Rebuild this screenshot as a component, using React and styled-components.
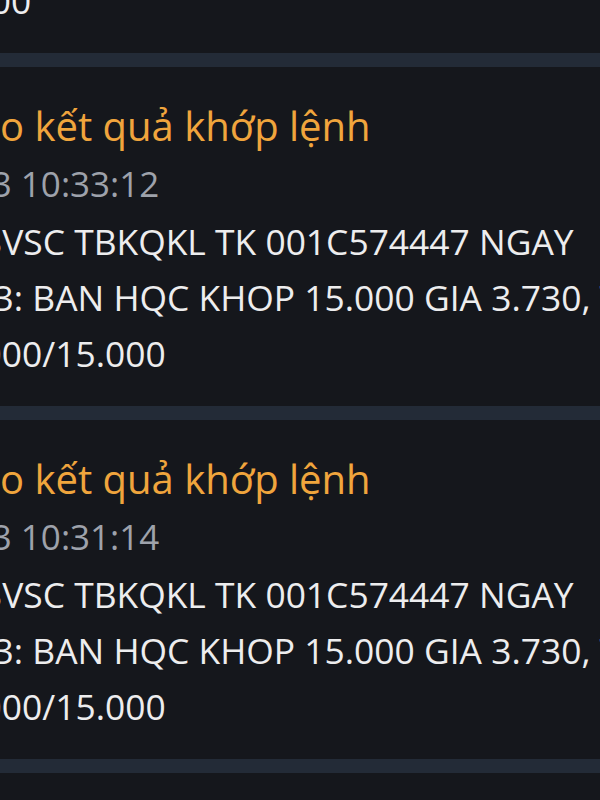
import React from 'react';
import styled, { createGlobalStyle } from 'styled-components';

const GlobalStyle = createGlobalStyle`
  html, body { margin: 0; padding: 0; background: #15171c; }
  body { font-family: "Open Sans", "Noto Sans", "DejaVu Sans", sans-serif; }
`;

const Viewport = styled.div`
  width: 600px;
  height: 800px;
  overflow: hidden;
  background: #15171c;
`;

const Feed = styled.div`
  display: flex;
  flex-direction: column;
  width: 1100px;
  margin-left: -174px;
  margin-top: -286px;
`;

const Item = styled.article`
  display: flex;
  flex-direction: column;
  padding: 33px 0 25px 0;
  background: #15171c;
`;

const Divider = styled.div`
  height: 14px;
  background: #232b37;
`;

const Title = styled.h3`
  margin: 0;
  font-size: 40px;
  line-height: 52px;
  font-weight: 400;
  color: #f0a53d;
  white-space: nowrap;
`;

const Time = styled.div`
  margin-top: 3px;
  font-size: 35px;
  line-height: 58px;
  color: #9ea2ab;
  white-space: nowrap;
`;

const Body = styled.p`
  margin: 0;
  font-size: 35.4px;
  line-height: 56px;
  color: #ededee;
  white-space: nowrap;
`;

const items = [
  {
    time: '18/08/2023 10:35:40',
    lines: [
      'Tin nhắn BVSC TBKQKL TK 001C574447 NGAY',
      '18/08/2023: BAN HQC KHOP 1.500 GIA 3.730, TONG KL',
      'KHOP: 1.500',
    ],
  },
  {
    time: '18/08/2023 10:33:12',
    lines: [
      'Tin nhắn BVSC TBKQKL TK 001C574447 NGAY',
      '18/08/2023: BAN HQC KHOP 15.000 GIA 3.730, TONG KL',
      'KHOP 15.000/15.000',
    ],
  },
  {
    time: '18/08/2023 10:31:14',
    lines: [
      'Tin nhắn BVSC TBKQKL TK 001C574447 NGAY',
      '18/08/2023: BAN HQC KHOP 15.000 GIA 3.730, TONG KL',
      'KHOP 15.000/15.000',
    ],
  },
  {
    time: '18/08/2023 10:30:02',
    lines: [
      'Tin nhắn BVSC TBKQKL TK 001C574447 NGAY',
      '18/08/2023: MUA HQC KHOP 10.000 GIA 3.720, TONG KL',
      'KHOP 10.000/10.000',
    ],
  },
];

export default function App() {
  return (
    <>
      <GlobalStyle />
      <Viewport>
        <Feed>
          {items.map((it, i) => (
            <React.Fragment key={i}>
              {i > 0 && <Divider />}
              <Item>
                <Title>Thông báo kết quả khớp lệnh</Title>
                <Time>{it.time}</Time>
                <Body>
                  {it.lines[0]}
                  <br />
                  {it.lines[1]}
                  <br />
                  {it.lines[2]}
                </Body>
              </Item>
            </React.Fragment>
          ))}
        </Feed>
      </Viewport>
    </>
  );
}
